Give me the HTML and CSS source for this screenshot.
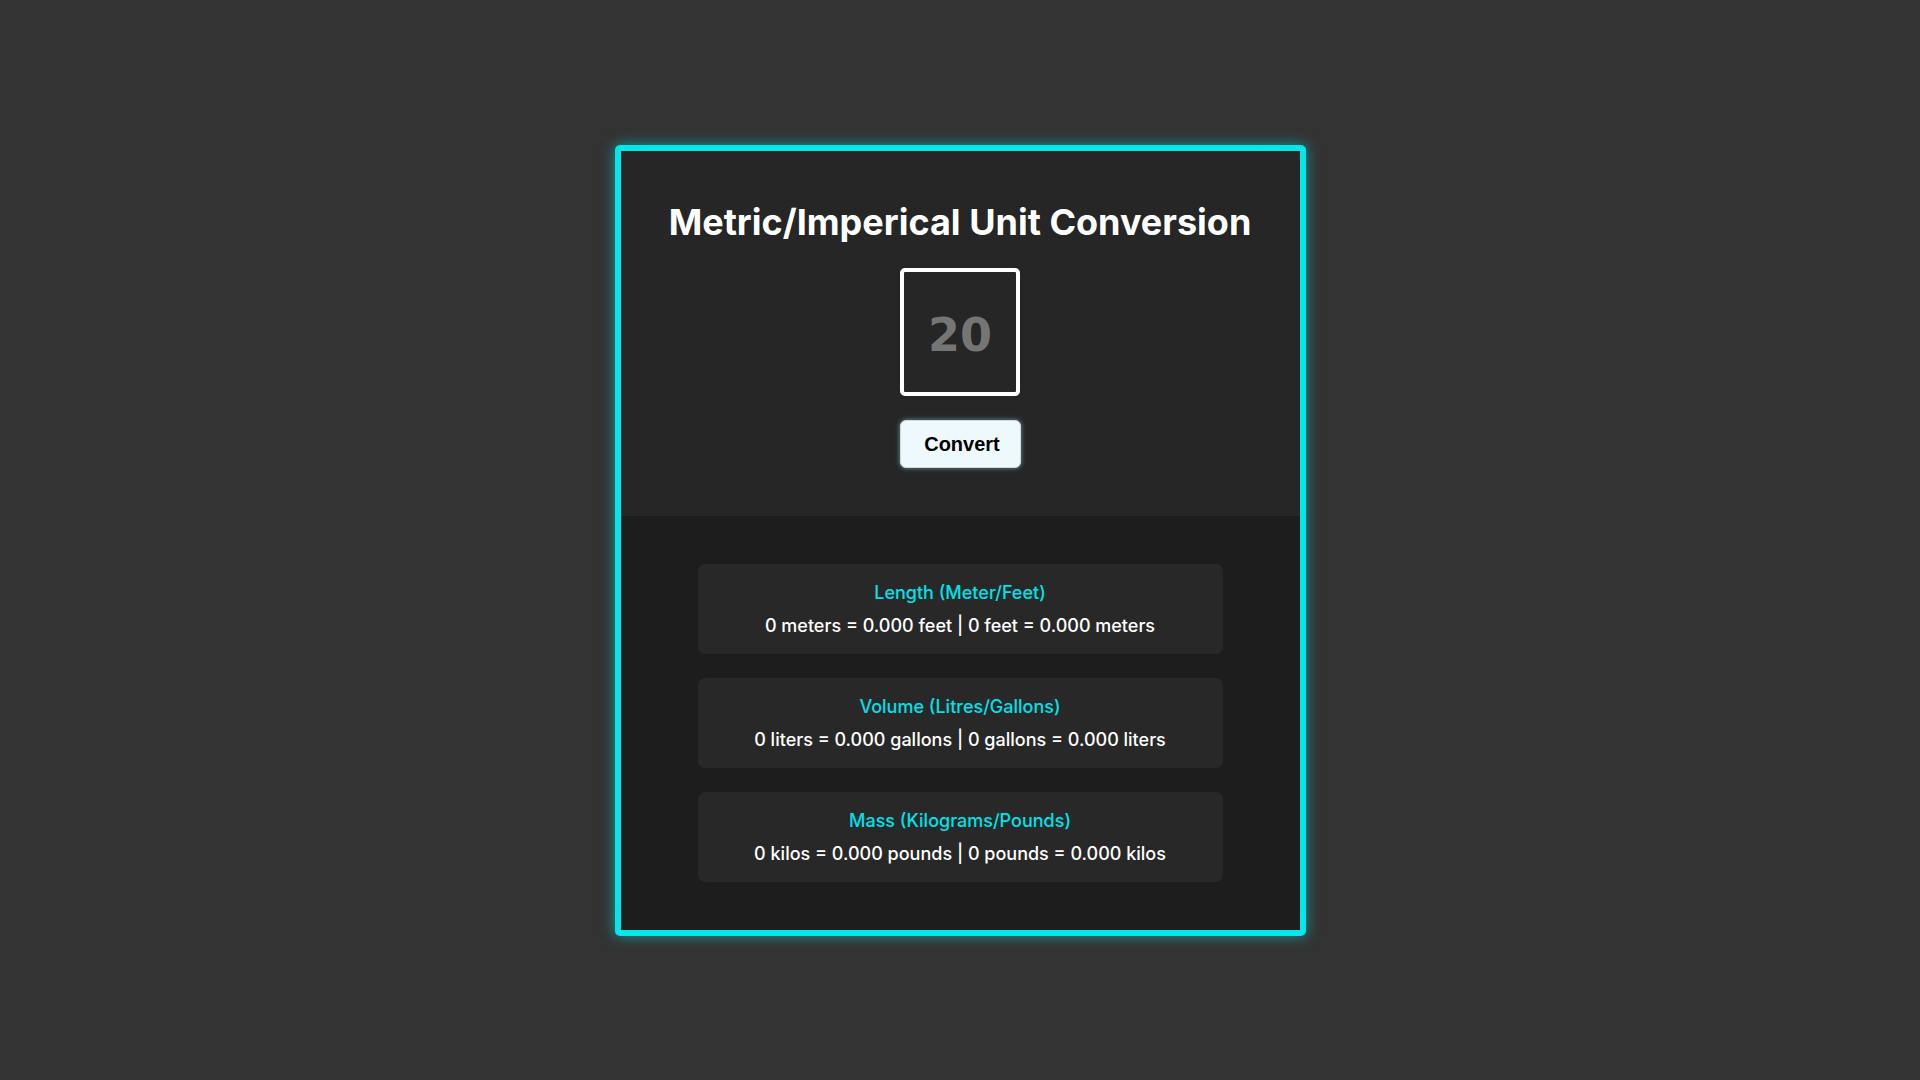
FILE: index.html
```html
<!DOCTYPE html>
<html lang="en">
<head>
<meta charset="utf-8">
<title>Unit Conversion</title>
<link rel="stylesheet" href="styles.css">
</head>
<body>
<main class="card">
  <section class="top">
    <h1 class="title">Metric/Imperical Unit Conversion</h1>
    <input class="num" type="text" placeholder="20">
    <button class="btn">Convert</button>
  </section>
  <section class="bottom">
    <div class="result">
      <h2 class="r-title">Length (Meter/Feet)</h2>
      <p class="r-text">0 meters = 0.000 feet | 0 feet = 0.000 meters</p>
    </div>
    <div class="result">
      <h2 class="r-title">Volume (Litres/Gallons)</h2>
      <p class="r-text">0 liters = 0.000 gallons | 0 gallons = 0.000 liters</p>
    </div>
    <div class="result">
      <h2 class="r-title">Mass (Kilograms/Pounds)</h2>
      <p class="r-text">0 kilos = 0.000 pounds | 0 pounds = 0.000 kilos</p>
    </div>
  </section>
</main>
</body>
</html>
```
FILE: styles.css
```css
* { box-sizing: border-box; }
html, body {
  margin: 0;
  padding: 0;
  background: #333333;
  font-family: Inter, "Noto Sans", sans-serif;
}
body {
  min-height: 1080px;
  display: flex;
  justify-content: center;
  align-items: flex-start;
  padding-top: 145px;
}
.card {
  width: 691px;
  border: 6px solid #00e8ec;
  border-radius: 5px;
  box-shadow: 0 0 14px rgba(0, 232, 236, 0.55);
  background: #1d1d1d;
  overflow: hidden;
}
.top {
  background: #262626;
  display: flex;
  flex-direction: column;
  align-items: center;
  padding: 51px 0 48px;
}
.title {
  margin: 0 0 26px;
  color: #ffffff;
  font-family: Inter, sans-serif;
  font-weight: 700;
  font-size: 36px;
  line-height: 40px;
}
.num {
  width: 120px;
  height: 128px;
  border: 4px solid #ffffff;
  border-radius: 5px;
  background: #262626;
  color: #ffffff;
  text-align: center;
  font-family: "DejaVu Sans", Verdana, sans-serif;
  font-weight: 700;
  font-size: 46px;
  outline: none;
  padding: 5px 0 0;
}
.num::placeholder { color: #757575; }
.btn {
  margin-top: 24px;
  width: 121px;
  height: 48px;
  border: 1px solid #cfd8da;
  border-radius: 6px;
  background: #eef9fd;
  color: #000000;
  font-family: "Liberation Sans", Arial, sans-serif;
  font-weight: 700;
  font-size: 20px;
  box-shadow: 0 0 5px rgba(160, 220, 225, 0.6);
  padding: 0 0 0 4px;
}
.bottom {
  display: flex;
  flex-direction: column;
  align-items: center;
  gap: 24px;
  padding: 48px 0 48px;
}
.result {
  width: 525px;
  height: 90px;
  background: #282828;
  border-radius: 7px;
  display: flex;
  flex-direction: column;
  align-items: center;
  justify-content: center;
}
.r-title {
  margin: 0 0 6px;
  color: #00e1ea;
  font-weight: 500;
  font-size: 18px;
  line-height: 27px;
}
.r-text {
  margin: 0;
  color: #ffffff;
  font-weight: 500;
  font-size: 18px;
  line-height: 27px;
}
```
